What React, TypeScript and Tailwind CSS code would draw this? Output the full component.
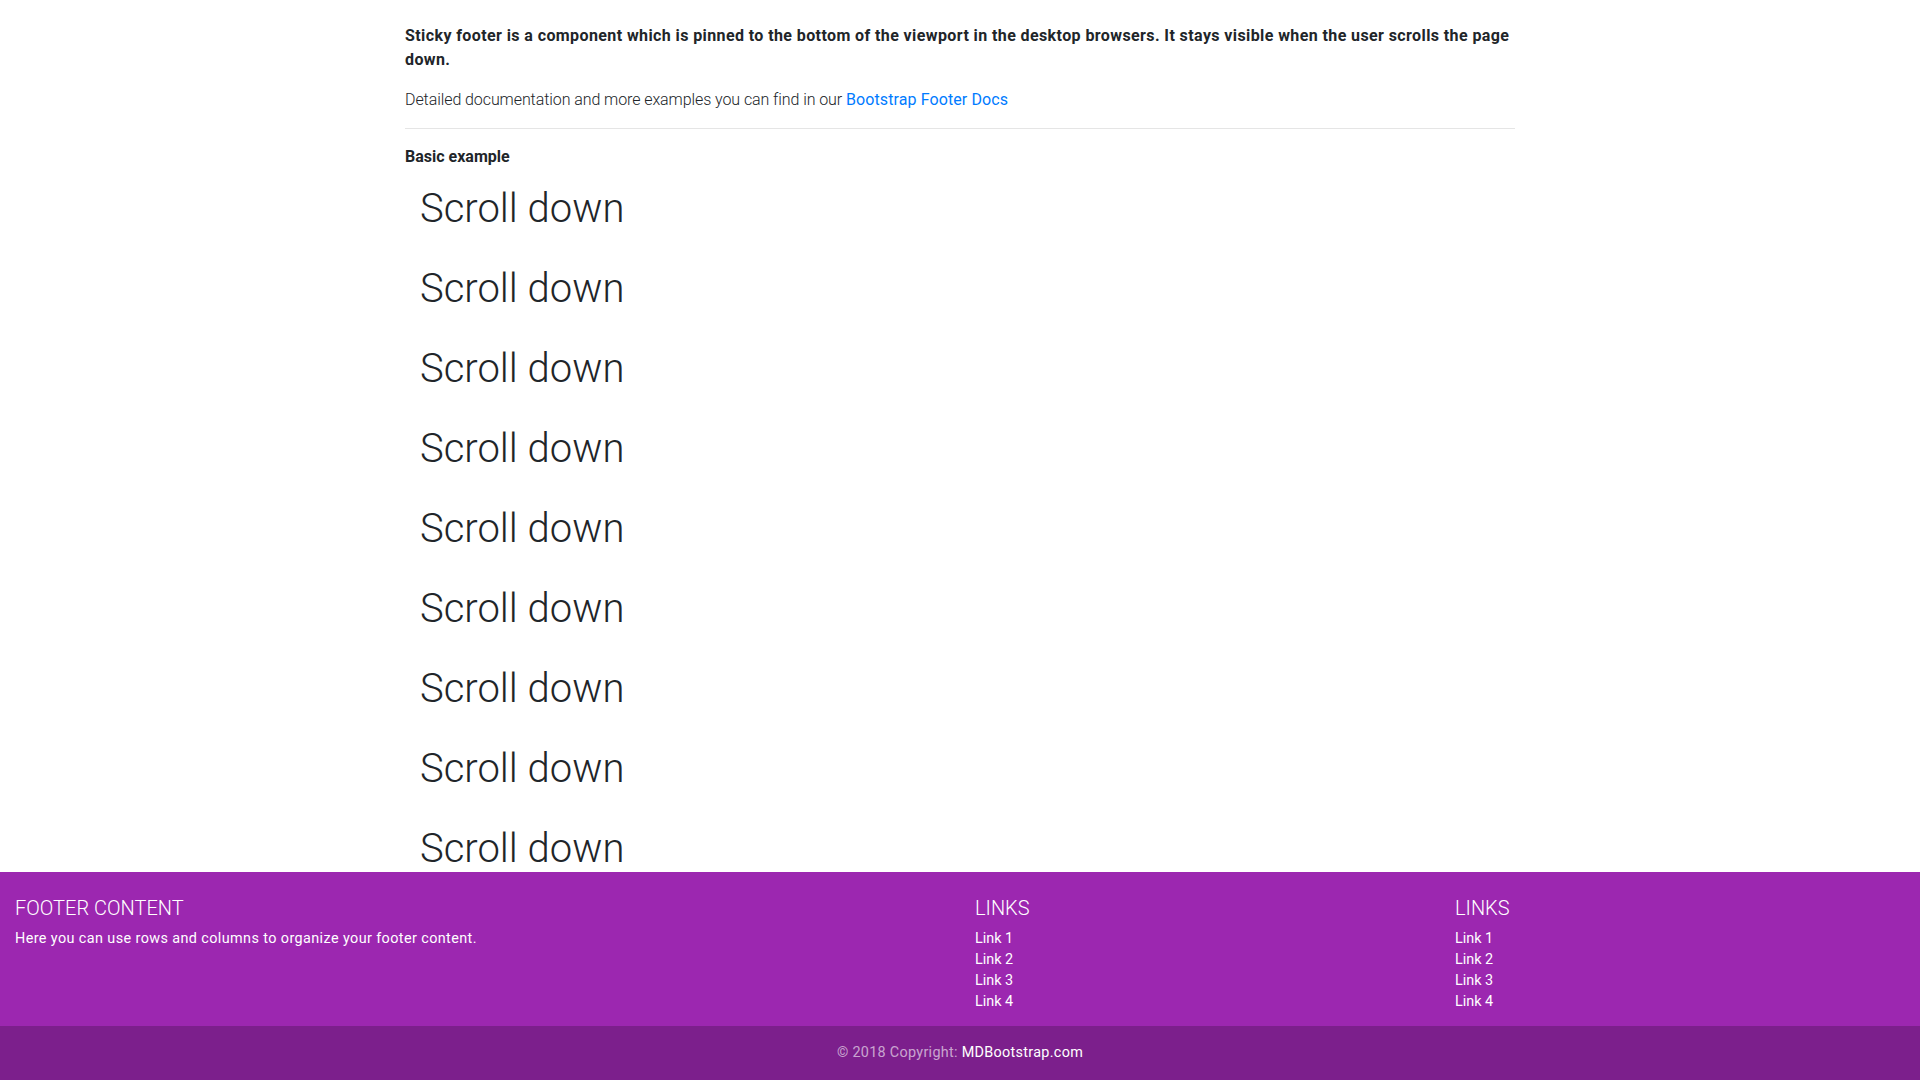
const rows = Array.from({ length: 9 })

function FooterLinks() {
  return (
    <div className="w-1/4 px-[15px]">
      <h5 className="mb-2 text-[20px] font-light uppercase leading-[1.2]">Links</h5>
      <ul className="mb-[14px] list-none leading-[21px]">
        <li><a href="#!" className="text-white">Link 1</a></li>
        <li><a href="#!" className="text-white">Link 2</a></li>
        <li><a href="#!" className="text-white">Link 3</a></li>
        <li><a href="#!" className="text-white">Link 4</a></li>
      </ul>
    </div>
  )
}

export default function App() {
  return (
    <div
      className="flex h-screen flex-col overflow-hidden bg-white text-[#212529]"
      style={{ fontFamily: 'Roboto, "Liberation Sans", sans-serif' }}
    >
      <main className="min-h-0 flex-1 overflow-hidden">
        <div className="mx-auto w-[1140px] px-[15px] pt-6">
          <p className="mb-4 text-base leading-6 font-bold tracking-[0.4px]">
            Sticky footer is a component which is pinned to the bottom of the viewport in the desktop browsers. It stays visible when the user scrolls the page down.
          </p>
          <p className="mb-4 text-base leading-6 font-light tracking-[-0.08px]">
            Detailed documentation and more examples you can find in our{' '}
            <a href="#!" className="font-normal tracking-[0.1px] text-[#007bff]">Bootstrap Footer Docs</a>
          </p>
          <hr className="mt-4 mb-4 border-t border-black/10" />
          <p className="text-base leading-6 font-bold">Basic example</p>
          <div className="ml-[15px] pt-4">
            {rows.map((_, i) => (
              <div key={i} className="h-[80px] text-[40px] leading-[48px] font-light">
                Scroll down
              </div>
            ))}
          </div>
        </div>
      </main>

      <footer className="shrink-0 bg-[#9c27b0] text-[14.4px] leading-[1.5] text-white">
        <div className="flex pt-6">
          <div className="w-1/2 px-[15px]">
            <h5 className="mb-2 text-[20px] font-light uppercase leading-[1.2]">Footer Content</h5>
            <p className="mb-3 tracking-[0.4px]">Here you can use rows and columns to organize your footer content.</p>
          </div>
          <FooterLinks />
          <FooterLinks />
        </div>
        <div className="bg-black/20 py-4 text-center tracking-[0.3px] text-white/60">
          © 2018 Copyright: <a href="#!" className="text-white">MDBootstrap.com</a>
        </div>
      </footer>
    </div>
  )
}
